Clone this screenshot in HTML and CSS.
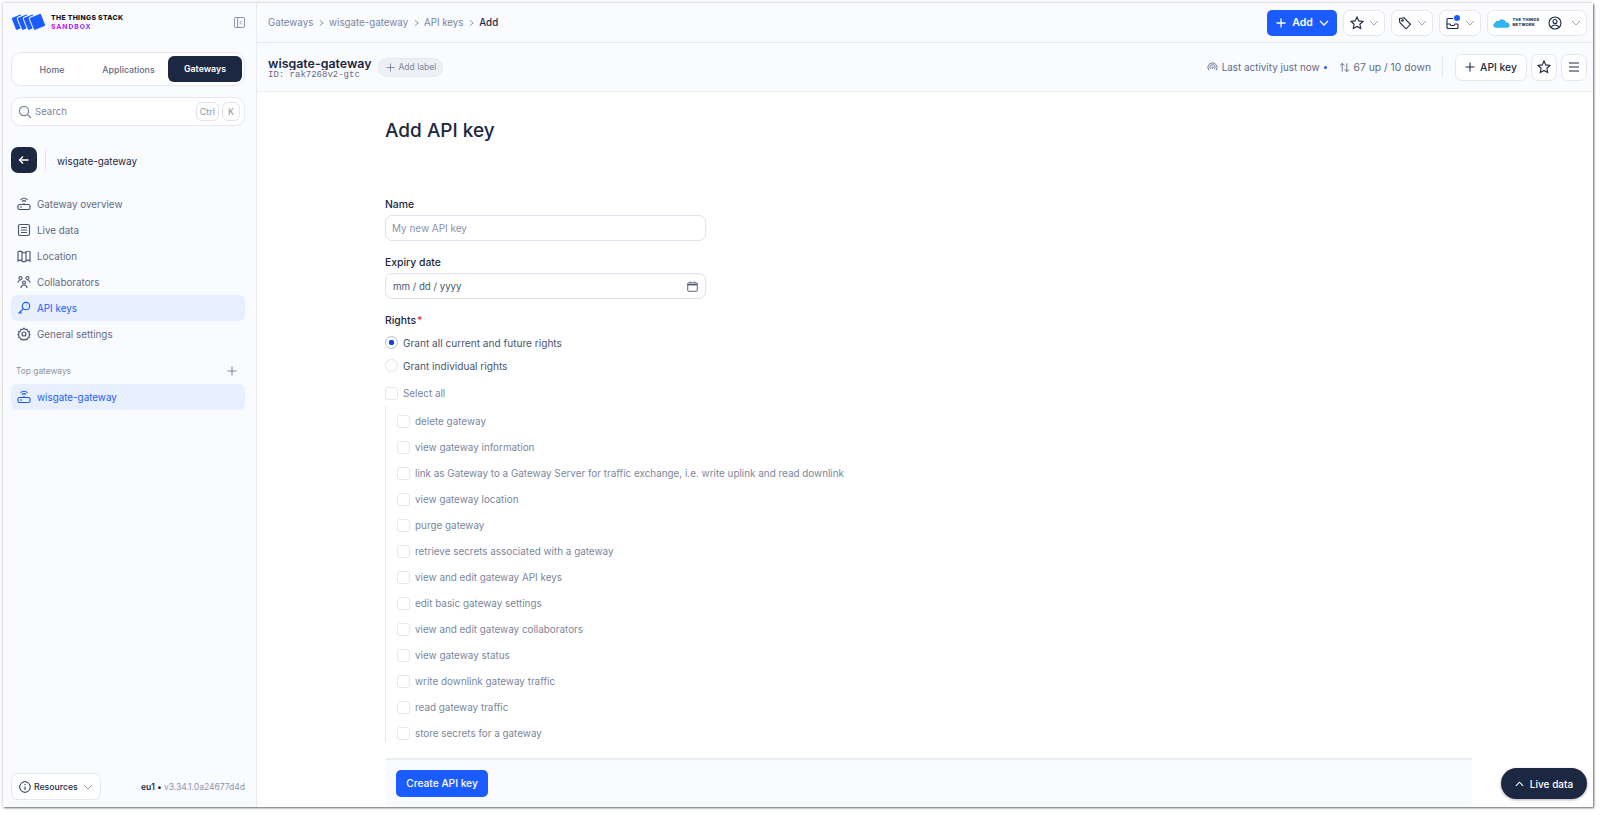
FILE: index.html
```html
<!DOCTYPE html>
<html lang="en">
<head>
<meta charset="utf-8">
<title>Add API key</title>
<link rel="stylesheet" href="styles.css">
</head>
<body>
<div class="window">
  <aside class="sidebar">
    <div class="brand">
      <svg class="logo" viewBox="0 0 36 20" width="36" height="20">
        <g fill="#1a5cff" stroke="#fafbff" stroke-width="1" stroke-linejoin="round">
          <rect x="2" y="3" width="11" height="14" rx="1.500" transform="rotate(-22 8 10)"/>
          <rect x="8" y="3" width="11" height="14" rx="1.500" transform="rotate(-22 14 10)"/>
          <rect x="14" y="3" width="11" height="14" rx="1.500" transform="rotate(-22 20 10)"/>
          <rect x="20" y="3" width="13" height="14" rx="1.500" transform="rotate(-22 26 10)"/>
        </g>
      </svg>
      <div class="brand-text">
        <div class="brand-top">THE THINGS STACK</div>
        <div class="brand-bottom">SANDBOX</div>
      </div>
      <svg class="collapse" viewBox="0 0 12 12" width="11" height="11" fill="none" stroke="#7b869c" stroke-width="1"><rect x=".5" y=".5" width="11" height="11" rx="1.500"/><path d="M4 .5v11M8.500 4 6.500 6l2 2"/></svg>
    </div>
    <div class="tabs">
      <span class="tab">Home</span>
      <span class="tab">Applications</span>
      <span class="tab tab-active">Gateways</span>
    </div>
    <div class="search">
      <svg viewBox="0 0 14 14" width="14" height="14" fill="none" stroke="#7b869c" stroke-width="1.200"><circle cx="6" cy="6" r="4.600"/><path d="m9.500 9.500 3.500 3.500"/></svg>
      <span class="search-text">Search</span>
      <span class="kbd">Ctrl</span>
      <span class="kbd">K</span>
    </div>
    <div class="back-row">
      <span class="back"><svg viewBox="0 0 12 12" width="12" height="12" fill="none" stroke="#fff" stroke-width="1.400"><path d="M10.500 6h-9M5 2.500 1.500 6 5 9.500"/></svg></span>
      <span class="back-name">wisgate-gateway</span>
    </div>
    <nav class="nav">
      <a class="nav-item"><svg class="ic" viewBox="0 0 14 14" fill="none" stroke="currentColor"><rect x="1" y="7.500" width="12" height="5" rx="1.500"/><path d="M3 10h2M5 4.500a3 3 0 0 1 4 0M3.500 2.800a5.200 5.200 0 0 1 7 0M7 6v1.500"/></svg>Gateway overview</a>
      <a class="nav-item"><svg class="ic" viewBox="0 0 14 14" fill="none" stroke="currentColor"><rect x="1.500" y="1.500" width="11" height="11" rx="1.500"/><path d="M4 4.500h6M4 7h6M4 9.500h6"/></svg>Live data</a>
      <a class="nav-item"><svg class="ic" viewBox="0 0 14 14" fill="none" stroke="currentColor"><path d="M1 3c1.500-1 3-1 4 0s3 1 4 0 3-1 4 0v9c-1-1-2.500-1-4 0s-3 1-4 0-2.500-1-4 0zM5 3v9M9 3v9"/></svg>Location</a>
      <a class="nav-item"><svg class="ic" viewBox="0 0 14 14" fill="none" stroke="currentColor"><circle cx="3.500" cy="3" r="1.500"/><circle cx="10.500" cy="3" r="1.500"/><circle cx="7" cy="7.500" r="1.500"/><path d="M1 7.500c0-1 1-2 2.500-2M13 7.500c0-1-1-2-2.500-2M4 13c0-2 1.200-3 3-3s3 1 3 3"/></svg>Collaborators</a>
      <a class="nav-item nav-active"><svg class="ic" viewBox="0 0 14 14" fill="none" stroke="currentColor"><circle cx="9" cy="5" r="3.700"/><path d="M6.300 7.700 1.500 12.500M3 11l1.500 1.500M9.500 4.500h.5"/></svg>API keys</a>
      <a class="nav-item"><svg class="ic" viewBox="0 0 14 14" fill="none" stroke="currentColor"><circle cx="7" cy="7" r="2"/><path d="M7 1.200 8.200 2.500 10 2.300l.6 1.700 1.700.7-.3 1.800L13 7.500l-1 1.300.3 1.600-1.700.6-.7 1.600-1.800-.2L7 13l-1.100-.6-1.800.2-.7-1.600-1.700-.6.300-1.600L1 7.500l1-1-.3-1.800 1.700-.7.600-1.700 1.800.2z"/></svg>General settings</a>
    </nav>
    <div class="top-head"><span>Top gateways</span><svg viewBox="0 0 10 10" width="10" height="10" stroke="#7b869c" stroke-width="1"><path d="M5 .5v9M.5 5h9"/></svg></div>
    <a class="nav-item nav-active"><svg class="ic" viewBox="0 0 14 14" fill="none" stroke="currentColor"><rect x="1" y="7.500" width="12" height="5" rx="1.500"/><path d="M3 10h2M5 4.500a3 3 0 0 1 4 0M3.500 2.800a5.200 5.200 0 0 1 7 0M7 6v1.500"/></svg>wisgate-gateway</a>
    <div class="side-foot">
      <span class="resources"><svg viewBox="0 0 12 12" width="12" height="12" fill="none" stroke="#1c2842"><circle cx="6" cy="6" r="5.300"/><path d="M6 5.500V9M6 3v1"/></svg>Resources<svg class="chev" viewBox="0 0 10 6" width="10" height="6" fill="none" stroke="#9aa3b5"><path d="m1 1 4 4 4-4"/></svg></span>
      <span class="version"><b>eu1</b> <b class="dot">•</b> v3.34.1.0a24677d4d</span>
    </div>
  </aside>
  <div class="main">
    <header class="topbar">
      <div class="crumbs"><span>Gateways</span><svg viewBox="0 0 6 8" width="5" height="8" fill="none" stroke="#7b869c"><path d="m1 .8 4 3.200-4 3.200"/></svg><span>wisgate-gateway</span><svg viewBox="0 0 6 8" width="5" height="8" fill="none" stroke="#7b869c"><path d="m1 .8 4 3.200-4 3.200"/></svg><span>API keys</span><svg viewBox="0 0 6 8" width="5" height="8" fill="none" stroke="#7b869c"><path d="m1 .8 4 3.200-4 3.200"/></svg><b>Add</b></div>
      <div class="top-actions">
        <span class="btn-add"><svg viewBox="0 0 10 10" width="10" height="10" stroke="#fff" stroke-width="1.300"><path d="M5 .5v9M.5 5h9"/></svg>Add<svg viewBox="0 0 10 6" width="10" height="6" fill="none" stroke="#fff" stroke-width="1.300"><path d="m1 1 4 4 4-4"/></svg></span>
        <span class="pill"><svg viewBox="0 0 14 14" width="14" height="14" fill="none" stroke="#1c2842" stroke-width="1.100"><path d="m7 1 1.800 3.900 4.200.5-3.100 2.900.8 4.200L7 10.400l-3.700 2.100.8-4.200L1 5.400l4.200-.5z"/></svg><svg class="chev" viewBox="0 0 10 6" width="10" height="6" fill="none" stroke="#9aa3b5"><path d="m1 1 4 4 4-4"/></svg></span>
        <span class="pill"><svg viewBox="0 0 14 14" width="14" height="14" fill="none" stroke="#1c2842" stroke-width="1.100"><path d="M1.500 2.500 6 1.800l6.500 6.500-4.500 4.500L1.800 6.500z"/><circle cx="4.500" cy="4.500" r=".8"/></svg><svg class="chev" viewBox="0 0 10 6" width="10" height="6" fill="none" stroke="#9aa3b5"><path d="m1 1 4 4 4-4"/></svg></span>
        <span class="pill pill-note"><svg viewBox="0 0 14 14" width="14" height="14" fill="none" stroke="#1c2842" stroke-width="1.100"><path d="M7 2.500H2a1 1 0 0 0-1 1v8a1 1 0 0 0 1 1h9a1 1 0 0 0 1-1V8M1 8h3l1 1.500h3L9 8h3"/></svg><em class="note-dot"></em><svg class="chev" viewBox="0 0 10 6" width="10" height="6" fill="none" stroke="#9aa3b5"><path d="m1 1 4 4 4-4"/></svg></span>
        <span class="pill pill-user">
          <svg viewBox="0 0 18 10" width="17" height="10"><path fill="#2fb5ec" d="M2.500 10a2.500 2.500 0 0 1-.4-4.900A3 3 0 0 1 6 3a4.500 4.500 0 0 1 8 1.500A2.800 2.800 0 0 1 15.500 10z"/></svg>
          <span class="ttn">THE THINGS<br>NETWORK</span>
          <svg class="avatar" viewBox="0 0 14 14" width="14" height="14" fill="none" stroke="#1c2842" stroke-width="1.100"><circle cx="7" cy="7" r="6"/><circle cx="7" cy="5.500" r="2"/><path d="M3.200 11c1-1.500 2.300-2 3.800-2s2.800.5 3.800 2"/></svg>
          <svg class="chev" viewBox="0 0 10 6" width="10" height="6" fill="none" stroke="#9aa3b5"><path d="m1 1 4 4 4-4"/></svg>
        </span>
      </div>
    </header>
    <section class="gw-head">
      <div class="gw-id">
        <div class="gw-title">wisgate-gateway</div>
        <div class="gw-sub">ID: rak7268v2-gtc</div>
      </div>
      <span class="label-btn"><svg viewBox="0 0 10 10" width="9" height="9" stroke="#7b869c"><path d="M5 .5v9M.5 5h9"/></svg>Add label</span>
      <div class="gw-right">
        <span class="stat"><svg viewBox="0 0 12 12" width="11" height="11" fill="none" stroke="#5f6b85"><path d="M2 9a5 5 0 1 1 8 0M3.800 7.500a2.800 2.800 0 1 1 4.400 0"/><circle cx="6" cy="6" r=".7"/></svg>Last activity just now<em class="blue-dot"></em></span>
        <span class="stat"><svg viewBox="0 0 12 12" width="11" height="11" fill="none" stroke="#5f6b85"><path d="M3.500 10.500v-9M1 4l2.500-2.500L6 4M8.500 1.500v9M6 8l2.500 2.500L11 8"/></svg>67 up / 10 down</span>
        <span class="sep"></span>
        <span class="act"><svg viewBox="0 0 10 10" width="10" height="10" stroke="#1c2842" stroke-width="1.100"><path d="M5 .5v9M.5 5h9"/></svg>API key</span>
        <span class="act act-sq"><svg viewBox="0 0 14 14" width="14" height="14" fill="none" stroke="#1c2842" stroke-width="1.100"><path d="m7 1 1.800 3.900 4.200.5-3.100 2.900.8 4.200L7 10.400l-3.700 2.100.8-4.200L1 5.400l4.200-.5z"/></svg></span>
        <span class="act act-sq"><svg viewBox="0 0 12 10" width="12" height="10" stroke="#1c2842" stroke-width="1.100"><path d="M1 1h10M1 5h10M1 9h10"/></svg></span>
      </div>
    </section>
    <div class="content">
      <h1>Add API key</h1>
      <form class="form">
        <label class="lbl">Name</label>
        <div class="field ph">My new API key</div>
        <label class="lbl">Expiry date</label>
        <div class="field date"><span>mm / dd / yyyy</span><svg viewBox="0 0 12 12" width="11" height="11" fill="none" stroke="#4a556e"><rect x=".8" y="2" width="10.400" height="9.200" rx=".8"/><path d="M1 4h10" stroke-width="1.600"/><path d="M3.500.5V2M8.500.5V2"/></svg></div>
        <label class="lbl">Rights<span class="req">*</span></label>
        <div class="radio on-row"><span class="r on"></span>Grant all current and future rights</div>
        <div class="radio"><span class="r"></span>Grant individual rights</div>
        <div class="chk all"><span class="c"></span>Select all</div>
        <div class="rights">
          <div class="chk"><span class="c"></span>delete gateway</div>
          <div class="chk"><span class="c"></span>view gateway information</div>
          <div class="chk"><span class="c"></span>link as Gateway to a Gateway Server for traffic exchange, i.e. write uplink and read downlink</div>
          <div class="chk"><span class="c"></span>view gateway location</div>
          <div class="chk"><span class="c"></span>purge gateway</div>
          <div class="chk"><span class="c"></span>retrieve secrets associated with a gateway</div>
          <div class="chk"><span class="c"></span>view and edit gateway API keys</div>
          <div class="chk"><span class="c"></span>edit basic gateway settings</div>
          <div class="chk"><span class="c"></span>view and edit gateway collaborators</div>
          <div class="chk"><span class="c"></span>view gateway status</div>
          <div class="chk"><span class="c"></span>write downlink gateway traffic</div>
          <div class="chk"><span class="c"></span>read gateway traffic</div>
          <div class="chk"><span class="c"></span>store secrets for a gateway</div>
        </div>
      </form>
      <div class="footer"><span class="create">Create API key</span></div>
    </div>
    <span class="live"><svg viewBox="0 0 10 6" width="9" height="6" fill="none" stroke="#fff" stroke-width="1.200"><path d="m1 5 4-4 4 4"/></svg>Live data</span>
  </div>
</div>
</body>
</html>
```
FILE: styles.css
```css
* { box-sizing: border-box; }
html, body { margin: 0; height: 815px; overflow: hidden; background: #fff; }
body { padding: 3px 7px 7px 3px; font-family: Inter, "Noto Sans", sans-serif; font-size: 10px; color: #1c2842; }
.window { display: flex; height: 804px; background: #fff; box-shadow: -1px -1px 3px rgba(0,0,0,.12), 1px 1px 2px rgba(0,0,0,.6); }
.sidebar { width: 254px; flex: none; background: #fafbff; border-right: 1px solid #e9ebf2; padding: 0 11px 0 8px; display: flex; flex-direction: column; }
.brand { display: flex; align-items: center; height: 36px; margin-bottom: 13px; }
.logo { margin: 2px 4px 0 0; }
.brand-text { font-weight: 800; font-size: 6.800px; line-height: 9.500px; letter-spacing: .35px; margin-top: 2px; color: #111; }
.brand-bottom { background: linear-gradient(90deg, #e01cf0, #7a3cff 60%, #3a4cff); -webkit-background-clip: text; background-clip: text; color: transparent; letter-spacing: .9px; }
.collapse { margin: 2px 0 0 auto; }
.tabs { display: flex; align-items: center; height: 34px; border: 1px solid #e6e8f0; border-radius: 10px; background: #fff; padding: 3px 2px 3px 3px; font-size: 8.800px; color: #5f6b85; }
.tab { flex: 1; text-align: center; font-weight: 500; }
.tab:first-child { flex: 0 0 74px; }
.tab-active { flex: 0 0 74px; height: 26px; line-height: 26px; background: #1c2842; color: #fff; border-radius: 6px; font-weight: 600; }
.search { display: flex; align-items: center; gap: 3px; height: 29px; margin-top: 11px; border: 1px solid #e6e8f0; border-radius: 10px; background: #fff; padding: 0 4px 0 6px; color: #7b869c; }
.search-text { flex: 1; font-size: 9.600px; }
.kbd { height: 19px; line-height: 17px; padding: 0 3px; min-width: 18px; text-align: center; border: 1px solid #e1e4ec; border-radius: 6px; font-size: 9px; color: #8c95a8; }
.back-row { display: flex; align-items: center; margin-top: 21px; height: 26px; margin-bottom: 18px; }
.back { display: flex; align-items: center; justify-content: center; width: 26px; height: 26px; border-radius: 7px; background: #1c2842; }
.back-name { margin-left: 8px; padding: 1px 0 0 11px; border-left: 1px solid #e1e4ec; line-height: 20px; font-size: 9.900px; color: #1c2842; }
.nav { display: flex; flex-direction: column; }
.nav-item { display: flex; align-items: center; gap: 6px; height: 26px; padding: 0 6px; border-radius: 6px; font-size: 9.850px; color: #5f6b85; }
.ic { width: 14px; height: 14px; flex: none; color: #4a556e; stroke-width: 1.150; }
.nav-active { background: #e8f0ff; color: #1a5cff; }
.nav-active .ic { color: #1a5cff; }
.top-head { display: flex; align-items: center; justify-content: space-between; padding: 0 8px 0 5px; margin: 16px 0 5px; height: 16px; font-size: 8.400px; color: #8c95a8; }
.side-foot { margin-top: auto; margin-bottom: 7px; display: flex; align-items: center; justify-content: space-between; }
.resources { display: inline-flex; align-items: center; gap: 3px; height: 27px; width: 90px; padding: 0 7px; border: 1px solid #e6e8f0; border-radius: 7px; background: #fff; font-size: 8.700px; font-weight: 500; color: #1c2842; }
.resources .chev { margin-left: auto; }
.version { font-size: 8.500px; color: #8c95a8; }
.version b { color: #1c2842; font-weight: 600; }
.main { position: relative; flex: 1; min-width: 0; display: flex; flex-direction: column; }
.topbar { display: flex; align-items: center; justify-content: space-between; height: 40px; flex: none; padding: 0 6px 0 11px; background: #fafbff; border-bottom: 1px solid #e6e8f0; }
.crumbs { display: flex; gap: 5.400px; align-items: center; font-size: 9.750px; color: #7b869c; }
.crumbs b { font-weight: 500; color: #1c2842; }
.top-actions { display: flex; align-items: center; gap: 6px; }
.btn-add { display: flex; align-items: center; width: 70px; height: 26px; padding: 0 8px 0 9px; justify-content: space-between; border-radius: 5px; background: #1a5cff; color: #fff; font-size: 10.500px; font-weight: 600; }
.pill { display: flex; align-items: center; justify-content: center; gap: 5px; width: 42px; height: 26px; border: 1px solid #e6e8f0; border-radius: 7px; background: #fff; position: relative; }
.pill-user { width: 100px; gap: 3px; }
.avatar { margin-left: 6px; }
.pill-user .chev { margin-left: 6px; }
.note-dot { position: absolute; left: 14px; top: 4px; width: 6px; height: 6px; border-radius: 50%; background: #1a5cff; }
.ttn { font-size: 3.900px; line-height: 4.500px; font-weight: 800; letter-spacing: .3px; color: #1c2842; white-space: nowrap; }
.gw-head { display: flex; align-items: center; height: 49px; flex: none; padding: 0 6px 0 11px; border-bottom: 1px solid #eceef4; background: #fafbff; }
.gw-title { height: 13px; line-height: 14px; font-size: 12.400px; font-weight: 600; overflow: hidden; color: #1c2842; margin-top: 2px; }
.gw-sub { font-family: "Liberation Mono", monospace; font-size: 9px; line-height: 10px; margin-top: 0; color: #5f6b85; }
.label-btn { display: flex; align-items: center; gap: 4px; margin-left: 6px; height: 19px; padding: 0 6px 0 7px; border-radius: 10px; background: #eef0f5; border: 1px solid #e6e8f0; font-size: 8.500px; color: #7b869c; }
.gw-right { margin-left: auto; display: flex; align-items: center; gap: 4px; color: #5f6b85; font-size: 9.900px; }
.stat { display: flex; align-items: center; gap: 4px; margin-right: 5px; }
.stat + .stat { margin-left: 3px; font-size: 10.300px; }
.blue-dot { width: 3px; height: 3px; border-radius: 50%; background: #1a5cff; }
.sep { width: 1px; height: 22px; margin: 0 8px 0 2px; background: #e6e8f0; }
.act { display: flex; align-items: center; justify-content: center; gap: 5px; width: 72px; height: 27px; border: 1px solid #e6e8f0; border-radius: 7px; background: #fff; color: #1c2842; font-size: 10.300px; font-weight: 500; }
.act-sq { width: 26px; }
.content { flex: 1; min-height: 0; padding: 0 0 0 128px; display: flex; flex-direction: column; overflow: hidden; }
h1 { margin: 27px 0 0; font-size: 19px; line-height: 24px; font-weight: 500; color: #1c2842; height: 24px; flex: none; }
.form { flex: 1; min-height: 0; overflow: hidden; padding-top: 55px; }
.lbl { display: block; height: 14px; line-height: 14px; font-size: 10.400px; font-weight: 500; color: #1c2842; }
.req { color: #e8392f; margin-left: 1px; }
.field { display: flex; align-items: center; justify-content: space-between; width: 321px; height: 26px; margin: 3px 0 15px; padding: 0 7px 0 6px; border: 1px solid #dfe2ec; border-radius: 7px; background: #fff; font-size: 9.950px; }
.ph { color: #8c95a8; }
.date { padding-left: 7px; color: #4a556e; font-size: 9.700px; }
.radio { display: flex; align-items: center; gap: 5px; height: 23px; font-size: 10.100px; color: #4a556e; }
.on-row { margin-top: 3px; }
.r { width: 13px; height: 13px; border-radius: 50%; border: 1px solid #dfe2ec; background: #fff; display: block; }
.r.on { border-color: #b9bfd0; background: radial-gradient(circle, #1246d6 2.500px, #fff 3px); }
.chk { display: flex; align-items: center; gap: 5px; height: 26px; font-size: 9.900px; color: #7b869c; }
.all { margin-top: 3px; }
.c { width: 13px; height: 13px; border-radius: 3px; border: 1px solid #e6e8f0; background: #fff; flex: none; }
.rights { border-left: 1px solid #e4e7f0; padding: 2px 0 0 11px; }
.rights .chk:last-child { height: 22px; align-items: flex-start; padding-top: 7px; }
.footer { flex: none; height: 49px; margin-right: 121px; padding: 10px 0 0 11px; border-top: 2px solid #eceef4; background: #fafbff; }
.create { display: inline-block; width: 92px; height: 27px; line-height: 27px; border-radius: 5px; background: #1a5cff; color: #fff; text-align: center; font-size: 10.200px; font-weight: 500; }
.live { position: absolute; right: 6px; bottom: 8px; display: flex; align-items: center; justify-content: center; gap: 6px; width: 86px; height: 31px; border-radius: 16px; background: #1c2842; color: #fff; font-size: 10px; font-weight: 500; box-shadow: 0 1px 3px rgba(0,0,0,.3); }
```
